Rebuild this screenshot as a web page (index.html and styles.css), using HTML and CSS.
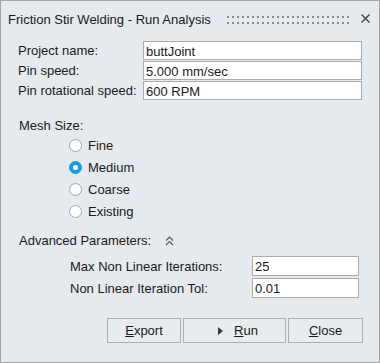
FILE: index.html
```html
<!DOCTYPE html>
<html>
<head>
<meta charset="utf-8">
<link rel="stylesheet" href="styles.css">
</head>
<body>
<div class="dialog">
  <div class="titlebar">
    <span class="title">Friction Stir Welding - Run Analysis</span>
    <svg class="grip" width="122" height="8" viewBox="0 0 122 8">
      <defs><pattern id="dots" width="5" height="6" patternUnits="userSpaceOnUse"><rect width="2" height="2" fill="#8a8d90"/></pattern></defs>
      <rect width="122" height="8" fill="url(#dots)"/>
    </svg>
    <svg class="close" width="9" height="9" viewBox="0 0 9 9">
      <path d="M0.5 0.5 L8.5 8.5 M8.5 0.5 L0.5 8.5" stroke="#3c3c3c" stroke-width="1.3" fill="none"/>
    </svg>
  </div>

  <div class="fields">
    <label class="lbl">Project name:</label><div class="input">buttJoint</div>
    <label class="lbl">Pin speed:</label><div class="input">5.000 mm/sec</div>
    <label class="lbl">Pin rotational speed:</label><div class="input">600 RPM</div>
  </div>

  <div class="section mesh">Mesh Size:</div>
  <div class="radios">
    <div class="radio"><span class="dot"></span><span>Fine</span></div>
    <div class="radio"><span class="dot on"></span><span>Medium</span></div>
    <div class="radio"><span class="dot"></span><span>Coarse</span></div>
    <div class="radio"><span class="dot"></span><span>Existing</span></div>
  </div>

  <div class="section adv">
    <span>Advanced Parameters:</span>
    <svg class="chev" width="9" height="10" viewBox="0 0 9 10">
      <path d="M1 4.5 L4.5 1 L8 4.5 M1 9 L4.5 5.5 L8 9" stroke="#5a5a5a" stroke-width="1.2" fill="none"/>
    </svg>
  </div>
  <div class="advfields">
    <label class="lbl">Max Non Linear Iterations:</label><div class="input">25</div>
    <label class="lbl">Non Linear Iteration Tol:</label><div class="input">0.01</div>
  </div>

  <div class="buttons">
    <button class="btn w-export"><u>E</u>xport</button>
    <button class="btn w-run"><span class="tri"></span><u>R</u>un</button>
    <button class="btn w-close"><u>C</u>lose</button>
  </div>
</div>
</body>
</html>
```
FILE: styles.css
```css
html, body {
  margin: 0;
  padding: 0;
  background: #e4eaee;
}
.dialog {
  width: 380px;
  height: 363px;
  box-sizing: border-box;
  border: 1px solid #a3a6a9;
  background: #e4eaee;
  font-family: "Liberation Sans", Arial, sans-serif;
  font-size: 13px;
  line-height: 15px;
  color: #1a1a1a;
  display: flex;
  flex-direction: column;
}
.titlebar {
  display: flex;
  align-items: center;
  padding: 11px 9px 0 7px;
  height: 15px;
}
.title {
  white-space: nowrap;
}
.grip {
  margin-left: 16px;
  display: block;
}
.close {
  margin-left: auto;
  display: block;
  margin-top: -2px;
}
.fields {
  display: grid;
  grid-template-columns: 125px 219px;
  grid-auto-rows: 19px;
  row-gap: 1px;
  margin-top: 14px;
  padding-left: 17px;
}
.lbl {
  display: flex;
  align-items: center;
  white-space: nowrap;
}
.input {
  box-sizing: border-box;
  background: #ffffff;
  border: 1px solid #a9abad;
  padding: 1px 2px 0 2px;
  display: flex;
  align-items: center;
  white-space: nowrap;
}
.section {
  padding-left: 18px;
}
.mesh {
  margin-top: 18px;
}
.radios {
  display: flex;
  flex-direction: column;
  padding-left: 68px;
  margin-top: 1px;
}
.radio {
  height: 22px;
  display: flex;
  align-items: center;
  gap: 6px;
}
.dot {
  width: 13px;
  height: 13px;
  box-sizing: border-box;
  border-radius: 50%;
  background: #ffffff;
  border: 1px solid #a4a7aa;
  flex: none;
}
.dot.on {
  background: #1a9be2;
  border-color: #1a9be2;
  position: relative;
}
.dot.on::after {
  content: "";
  position: absolute;
  left: 3px;
  top: 3px;
  width: 5px;
  height: 5px;
  border-radius: 50%;
  background: #ffffff;
}
.adv {
  margin-top: 11px;
  display: flex;
  align-items: center;
}
.chev {
  display: block;
  margin-left: 14px;
}
.advfields {
  display: grid;
  grid-template-columns: 182px 107px;
  grid-auto-rows: 20px;
  row-gap: 2px;
  margin-top: 8px;
  padding-left: 69px;
}
.buttons {
  display: flex;
  justify-content: flex-end;
  gap: 2px;
  margin-top: 20px;
  padding-right: 16px;
}
.btn {
  height: 25px;
  box-sizing: border-box;
  border: 1px solid #abaeb1;
  background: #e7ecef;
  font-family: "Liberation Sans", Arial, sans-serif;
  font-size: 13px;
  color: #1a1a1a;
  padding: 0;
  display: flex;
  align-items: center;
  justify-content: center;
}
.w-export { width: 74px; }
.w-run { width: 103px; }
.w-close { width: 75px; }
.tri {
  width: 0;
  height: 0;
  border-top: 4px solid transparent;
  border-bottom: 4px solid transparent;
  border-left: 5px solid #3a3a3a;
  margin-right: 11px;
  margin-left: 7px;
}
```
